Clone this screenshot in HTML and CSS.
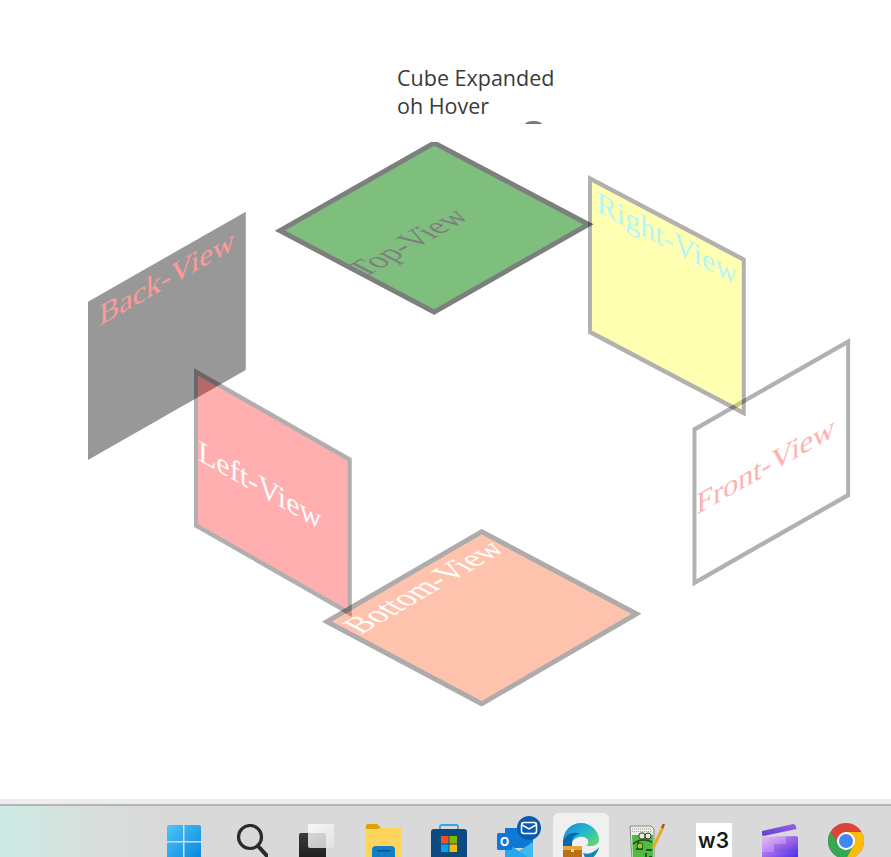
FILE: index.html
```html
<!DOCTYPE html>
<html lang="en">
<head>
<meta charset="utf-8">
<title>Cube Expanded on Hover</title>
<link rel="stylesheet" href="styles.css">
</head>
<body>
<main class="stage">
  <p class="caption">Cube Expanded<br>oh Hover</p>
  <div class="face back"><span>Back-View</span></div>
  <div class="face left"><span>Left-View</span></div>
  <div class="face front"><span>Front-View</span></div>
  <div class="face right"><span>Right-View</span></div>
  <div class="face bottom"><span>Bottom-View</span></div>
  <div class="face top"><span>Top-View</span></div>
  <div class="mask"></div>
  <span class="bump"></span>
</main>
<div class="shelf"></div>
<footer class="taskbar">
  <div class="slot">
    <svg class="icon" viewBox="0 0 36 36"><defs><linearGradient id="w1" x1="0" y1="0" x2="1" y2="1"><stop offset="0" stop-color="#4cc6f8"/><stop offset="1" stop-color="#0a86dc"/></linearGradient></defs><path fill="url(#w1)" d="M1 3a2 2 0 0 1 2-2h14v16H1zM18.500 1H33a2 2 0 0 1 2 2v14H18.500zM1 18.500h16V35H3a2 2 0 0 1-2-2zM18.500 18.500H35V33a2 2 0 0 1-2 2H18.500z"/></svg>
  </div>
  <div class="slot">
    <svg class="icon" viewBox="0 0 36 36"><circle cx="18" cy="13" r="11.500" fill="none" stroke="#2b2b2b" stroke-width="3.200"/><path d="M26 22l9 10" stroke="#2b2b2b" stroke-width="4" stroke-linecap="round"/></svg>
  </div>
  <div class="slot">
    <svg class="icon" viewBox="0 0 36 36"><defs><linearGradient id="t1" x1="0" y1="0" x2="1" y2="1"><stop offset="0" stop-color="#fff"/><stop offset="1" stop-color="#e2e2e2"/></linearGradient><linearGradient id="t2" x1="0" y1="0" x2="0" y2="1"><stop offset="0" stop-color="#3a3a3a"/><stop offset="1" stop-color="#1c1c1c"/></linearGradient></defs><rect x="1" y="9" width="27" height="28" rx="2" fill="url(#t2)"/><rect x="10" y="0" width="27" height="24" rx="2" fill="url(#t1)" opacity=".82"/></svg>
  </div>
  <div class="slot">
    <svg class="icon" viewBox="0 0 36 36"><path fill="#dca204" d="M1 2a2 2 0 0 1 2-2h9l4 4h20v8H1z"/><path fill="#fcd55a" d="M1 5h11l4-1h19a1 1 0 0 1 1 1v32H1z"/><rect x="7" y="22" width="23" height="18" rx="4" fill="#0f7fc9"/><rect x="12" y="26" width="13" height="1.500" fill="#0b4f80"/></svg>
  </div>
  <div class="slot">
    <svg class="icon" viewBox="0 0 36 36"><path d="M9 6V2.500A1.500 1.500 0 0 1 10.500 1h15A1.500 1.500 0 0 1 27 2.500V6" fill="none" stroke="#2fa7e8" stroke-width="1.800"/><rect x="0" y="5" width="36" height="32" rx="3" fill="#0d4a80"/><rect x="10" y="12" width="7.500" height="7.500" fill="#f25022"/><rect x="18.500" y="12" width="7.500" height="7.500" fill="#7fba00"/><rect x="10" y="20.500" width="7.500" height="7.500" fill="#00a4ef"/><rect x="18.500" y="20.500" width="7.500" height="7.500" fill="#ffb900"/></svg>
  </div>
  <div class="slot">
    <svg class="icon" viewBox="0 0 36 36"><path fill="#0f78d4" d="M8 4h28v20H8z"/><path fill="#28a8ea" d="M8 18l14 9 14-9v19H8z"/><path fill="#50c4f0" d="M22 27l14-9v19z" opacity=".6"/><rect x="0" y="9" width="15" height="17" rx="1.500" fill="#0f78d4"/><text class="olook" x="7.500" y="22" text-anchor="middle">O</text></svg>
    <svg class="mail" viewBox="0 0 24 24"><circle cx="12" cy="12" r="12" fill="#0b5cad"/><rect x="4.500" y="6.500" width="15" height="11" rx="2.500" fill="none" stroke="#fff" stroke-width="1.500"/><path d="M5 9l7 4 7-4" fill="none" stroke="#fff" stroke-width="1.500"/></svg>
  </div>
  <div class="slot active">
    <svg class="icon" viewBox="0 0 36 36"><defs><linearGradient id="e1" x1="0" y1="0" x2="1" y2=".9"><stop offset="0" stop-color="#1c86d6"/><stop offset=".5" stop-color="#21b6cf"/><stop offset="1" stop-color="#66dc64"/></linearGradient></defs><path fill="url(#e1)" d="M0 18C0 8 8 0 18 0c10 0 18 8 18 17 0 4-4 6-9 6h-4c3-2 3-6 0-8-5-3-12 0-14 4-2 2-6 2-9-1z"/><path fill="#0d65ad" d="M0 18c3-8 12-10 17-7-5 0-8 4-8 9v3H0z"/><path fill="#1385bd" d="M20 30c6 2 12-1 16-6-1 6-6 13-13 13z"/><rect x="0" y="23" width="19" height="16" rx="1" fill="#bd7117"/><rect x="0" y="23" width="19" height="4" fill="#e2a63a"/><rect x="8" y="26" width="3" height="3" fill="#f8d486"/></svg>
  </div>
  <div class="slot">
    <svg class="icon" viewBox="0 0 36 36"><path fill="#e8efe4" stroke="#8a8a8a" d="M1 2h21l3 3v30l-22 1z"/><path fill="#4fbc3d" d="M3 11h21v25H4z"/><path d="M3 5h20M3 7.500h20" stroke="#9aa89a" stroke-dasharray="1 1"/><circle cx="13" cy="12" r="3.200" fill="#e7ecd2" stroke="#27402a"/><circle cx="19" cy="12" r="3" fill="#e7ecd2" stroke="#27402a"/><path d="M4 20c6-5 13-5 19-2M9 17v9M7 25h7M17 26h6M17 29v6M20 33h3" stroke="#27531f" stroke-width="1.800" fill="none"/><circle cx="11" cy="22" r="3" fill="#9cc23a" stroke="#27531f"/><path d="M24 24L34 3" stroke="#e9ab2f" stroke-width="3"/><path d="M33 4l2-4" stroke="#a0522d" stroke-width="2.500"/></svg>
  </div>
  <div class="slot up">
    <div class="w3">w3</div>
  </div>
  <div class="slot">
    <svg class="icon" viewBox="0 0 36 36"><defs><linearGradient id="c1" x1="0" y1="0" x2=".8" y2="1"><stop offset="0" stop-color="#e8aef5"/><stop offset=".5" stop-color="#a56cf2"/><stop offset="1" stop-color="#4a2ff0"/></linearGradient><linearGradient id="c2" x1="0" y1="1" x2="1" y2="0"><stop offset="0" stop-color="#5f3fd6"/><stop offset="1" stop-color="#9a5fe8"/></linearGradient></defs><path fill="url(#c2)" d="M0 7l31-7c1.500 0 2.500 1 2.800 2l.7 3L1.500 12C.5 12 0 11 0 10z"/><path fill="url(#c1)" d="M0 13l34-1c1 0 2 1 2 2v23H0z"/><path fill="#fff" opacity=".16" d="M0 13h24v7H0zM0 20h12v8H0z"/><path fill="#000" opacity=".06" d="M24 12h12v8H24zM12 20h24v8H12z"/></svg>
  </div>
  <div class="slot up">
    <svg class="icon" viewBox="0 0 36 36"><circle cx="18" cy="18" r="18" fill="#db4437"/><path fill="#fbbc05" d="M18 36a18 18 0 0 0 15.600-27H18l7 12z"/><path fill="#34a853" d="M2.400 9A18 18 0 0 0 18 36l7.800-13.500L18 25a8 8 0 0 1-7-4z"/><circle cx="18" cy="18" r="9" fill="#fff"/><circle cx="18" cy="18" r="7" fill="#4285f4"/></svg>
  </div>
</footer>
</body>
</html>
```
FILE: styles.css
```css
html, body {
  margin: 0;
  height: 100%;
}
body {
  display: flex;
  flex-direction: column;
  overflow: hidden;
  background: #fff;
}
.stage {
  position: relative;
  flex: 0 0 799px;
}
.caption {
  position: absolute;
  left: 397px;
  top: 64px;
  margin: 0;
  font: 21.500px/28px "Open Sans", sans-serif;
  color: #3a3a3a;
}
.mask {
  position: absolute;
  left: 400px;
  top: 124px;
  width: 70px;
  height: 18px;
  background: #fff;
}
.bump {
  position: absolute;
  left: 525px;
  top: 121px;
  width: 17px;
  height: 3px;
  background: #777;
  border-radius: 50% 50% 0 0 / 100% 100% 0 0;
}
.face {
  position: absolute;
  left: 0;
  top: 0;
  box-sizing: border-box;
  width: 160px;
  height: 160px;
  display: flex;
  white-space: nowrap;
  border: solid #000;
  border-width: 5px 4px;
  font: 30.500px "Liberation Serif", serif;
  transform-origin: 0 0;
}
.back {
  border: 0;
  background: #000;
  color: #f00;
  opacity: .4;
  justify-content: center;
  padding-top: 4px;
  transform: matrix(.986, -.5625, 0, .99, 88, 301.700);
}
.right {
  background: #ff0;
  color: #00e8e8;
  opacity: .3;
  justify-content: center;
  transform: matrix(.986, .52, 0, .99, 588, 175);
}
.front {
  background: #fff;
  color: #f00;
  opacity: .3;
  align-items: center;
  transform: matrix(.985, -.5625, 0, .99, 692.500, 428);
}
.left {
  background: #f00;
  color: #fff;
  opacity: .31;
  align-items: center;
  transform: matrix(.985, .5625, 0, .99, 194, 368.300);
}
.bottom {
  background: #ff4500;
  color: #fff;
  opacity: .32;
  border-width: 5px;
  justify-content: center;
  transform: matrix(.998, -.58, .998, .53, 322, 621.700);
}
.top {
  background: #008000;
  color: #000;
  opacity: .5;
  border-width: 5px;
  align-items: center;
  transform: matrix(.995, -.565, .995, .525, 275, 230.700);
}
.bottom span,
.top span {
  display: block;
  flex: none;
  transform: scaleX(.88);
}
.top span {
  transform-origin: 0 50%;
  margin-left: -5px;
}
.bottom span {
  transform-origin: 50% 50%;
}
.shelf {
  flex: 0 0 7px;
  box-sizing: border-box;
  background: #ededed;
  border-bottom: 2px solid #b4b4b4;
}
.taskbar {
  flex: 1;
  display: flex;
  align-items: flex-start;
  gap: 6.200px;
  padding-left: 154px;
  background: linear-gradient(90deg, #cdeae4 0, #d8dfdc 90px, #d9d9d9 160px);
}
.slot {
  position: relative;
  flex: 0 0 60px;
  height: 60px;
  display: flex;
  justify-content: center;
  padding-top: 18px;
  box-sizing: border-box;
}
.up {
  padding-top: 17px;
}
.active::before {
  content: "";
  position: absolute;
  left: 2px;
  right: 2px;
  top: 7px;
  bottom: 0;
  background: #f0f0f0;
  border-radius: 6px 6px 0 0;
}
.active {
  padding-top: 17px;
}
.icon {
  position: relative;
  width: 36px;
  height: 36px;
  flex: none;
}
.olook {
  font: 700 12px "Open Sans", sans-serif;
  fill: #fff;
}
.mail {
  position: absolute;
  left: 32px;
  top: 10px;
  width: 24px;
  height: 24px;
}
.w3 {
  width: 36px;
  height: 36px;
  background: #fff;
  text-align: center;
  font: 600 21px/36px "Inter", sans-serif;
  color: #1a1a1a;
}
```
